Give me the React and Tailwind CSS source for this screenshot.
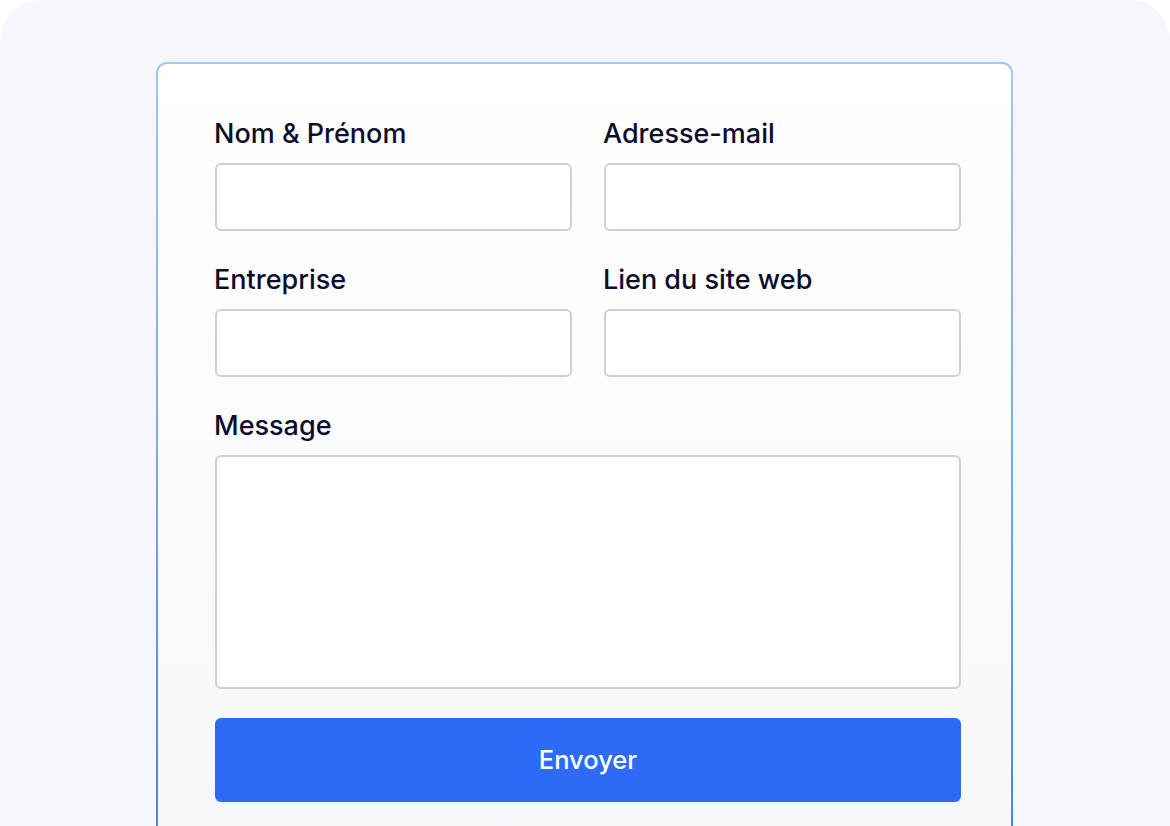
import React, { useState } from "react";

const fields = [
  { name: "fullName", label: "Nom & Prénom" },
  { name: "email", label: "Adresse-mail", type: "email" },
  { name: "company", label: "Entreprise" },
  { name: "website", label: "Lien du site web" },
];

function Field({ label, children }) {
  return (
    <div className="flex flex-col">
      <label className="mb-[13px] -ml-px text-[27px] leading-[32px] font-medium text-[#0b0d2b]">{label}</label>
      {children}
    </div>
  );
}

export default function App() {
  const [formData, setFormData] = useState({
    fullName: "",
    email: "",
    company: "",
    website: "",
    message: "",
  });

  const handleChange = (e) => {
    const { name, value } = e.target;
    setFormData((prev) => ({ ...prev, [name]: value }));
  };

  return (
    <div className="min-h-[826px] bg-white" style={{ fontFamily: "Inter, 'Noto Sans', sans-serif" }}>
      <div className="h-[826px] overflow-hidden rounded-t-[40px] bg-[#f5f7fa] pt-[62px]">
        <div className="ml-[156px] w-[857px] rounded-[11px] bg-linear-to-b from-[#a3c6f5] via-[#7aa6ee] to-[#4a7ee2] p-[2px]">
          <form
            onSubmit={(e) => e.preventDefault()}
            className="h-[800px] rounded-[9px] bg-linear-to-b from-white to-[#f5f7fa] pt-[54px] pl-[57px] pr-[50px]"
          >
            <div className="grid grid-cols-2 gap-x-[32px] gap-y-[33px]">
              {fields.map((f) => (
                <Field key={f.name} label={f.label}>
                  <input
                    type={f.type || "text"}
                    name={f.name}
                    value={formData[f.name]}
                    onChange={handleChange}
                    className="h-[68px] w-full rounded-[6px] border-2 border-[#d0d0d0] bg-white px-4 text-lg outline-none"
                  />
                </Field>
              ))}
              <div className="col-span-2">
                <Field label="Message">
                  <textarea
                    name="message"
                    value={formData.message}
                    onChange={handleChange}
                    className="h-[234px] w-full resize-none rounded-[6px] border-2 border-[#d0d0d0] bg-white px-4 py-3 text-lg outline-none"
                  />
                </Field>
              </div>
            </div>
            <button
              type="submit"
              className="mt-[29px] h-[84px] w-full rounded-[6px] bg-[#2d6bf6] text-[25.5px] font-medium text-white"
            >
              Envoyer
            </button>
          </form>
        </div>
      </div>
    </div>
  );
}
